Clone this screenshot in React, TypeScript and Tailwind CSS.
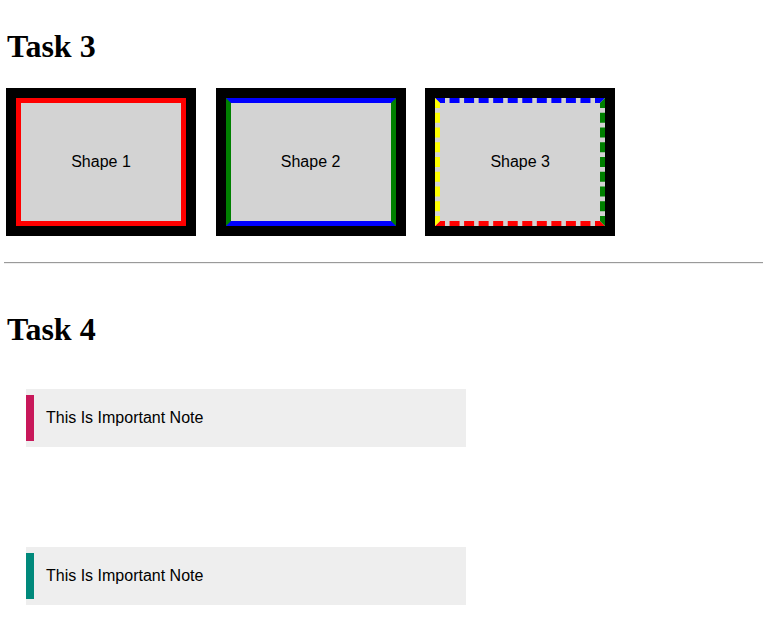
import React from "react";

type Shape = { label: string; border: string };

const shapes: Shape[] = [
  { label: "Shape 1", border: "border-solid border-[#ff0000]" },
  {
    label: "Shape 2",
    border: "border-solid border-y-[#0000ff] border-x-[#008000]",
  },
  {
    label: "Shape 3",
    border:
      "border-dashed border-t-[#0000ff] border-r-[#008000] border-b-[#ff0000] border-l-[#ffff00]",
  },
];

function Note({ bar }: { bar: string }) {
  return (
    <div className="flex h-[58px] w-[440px] items-center bg-[#eeeeee]">
      <span className={`h-[46px] w-[8px] ${bar}`} />
      <p className="pl-3 text-[16px] text-black">This Is Important Note</p>
    </div>
  );
}

export default function App() {
  return (
    <div className="min-h-[629px] bg-white pb-6 pl-[6px] pt-[28px] font-['Liberation_Sans',Arial,sans-serif] text-black">
      <h1 className="pl-px font-['Liberation_Serif','Times_New_Roman',serif] text-[32px] font-bold leading-[37px]">
        Task 3
      </h1>

      <div className="mt-[23px] flex gap-[19.6px]">
        {shapes.map((s) => (
          <div key={s.label} className="bg-black p-[10px]">
            <div
              className={`flex h-[128px] w-[170px] items-center justify-center border-[5px] bg-[#d3d3d3] text-[16px] ${s.border}`}
            >
              {s.label}
            </div>
          </div>
        ))}
      </div>

      <div className="-ml-0.5 mt-[26px] border-b border-t border-b-[#eeeeee] border-t-[#9a9a9a]" />

      <h1 className="mt-[47px] pl-px font-['Liberation_Serif','Times_New_Roman',serif] text-[32px] font-bold leading-[37px]">
        Task 4
      </h1>

      <div className="ml-5 mt-[41px] flex flex-col gap-[100px]">
        <Note bar="bg-[#c8185a]" />
        <Note bar="bg-[#00897b]" />
      </div>
    </div>
  );
}
